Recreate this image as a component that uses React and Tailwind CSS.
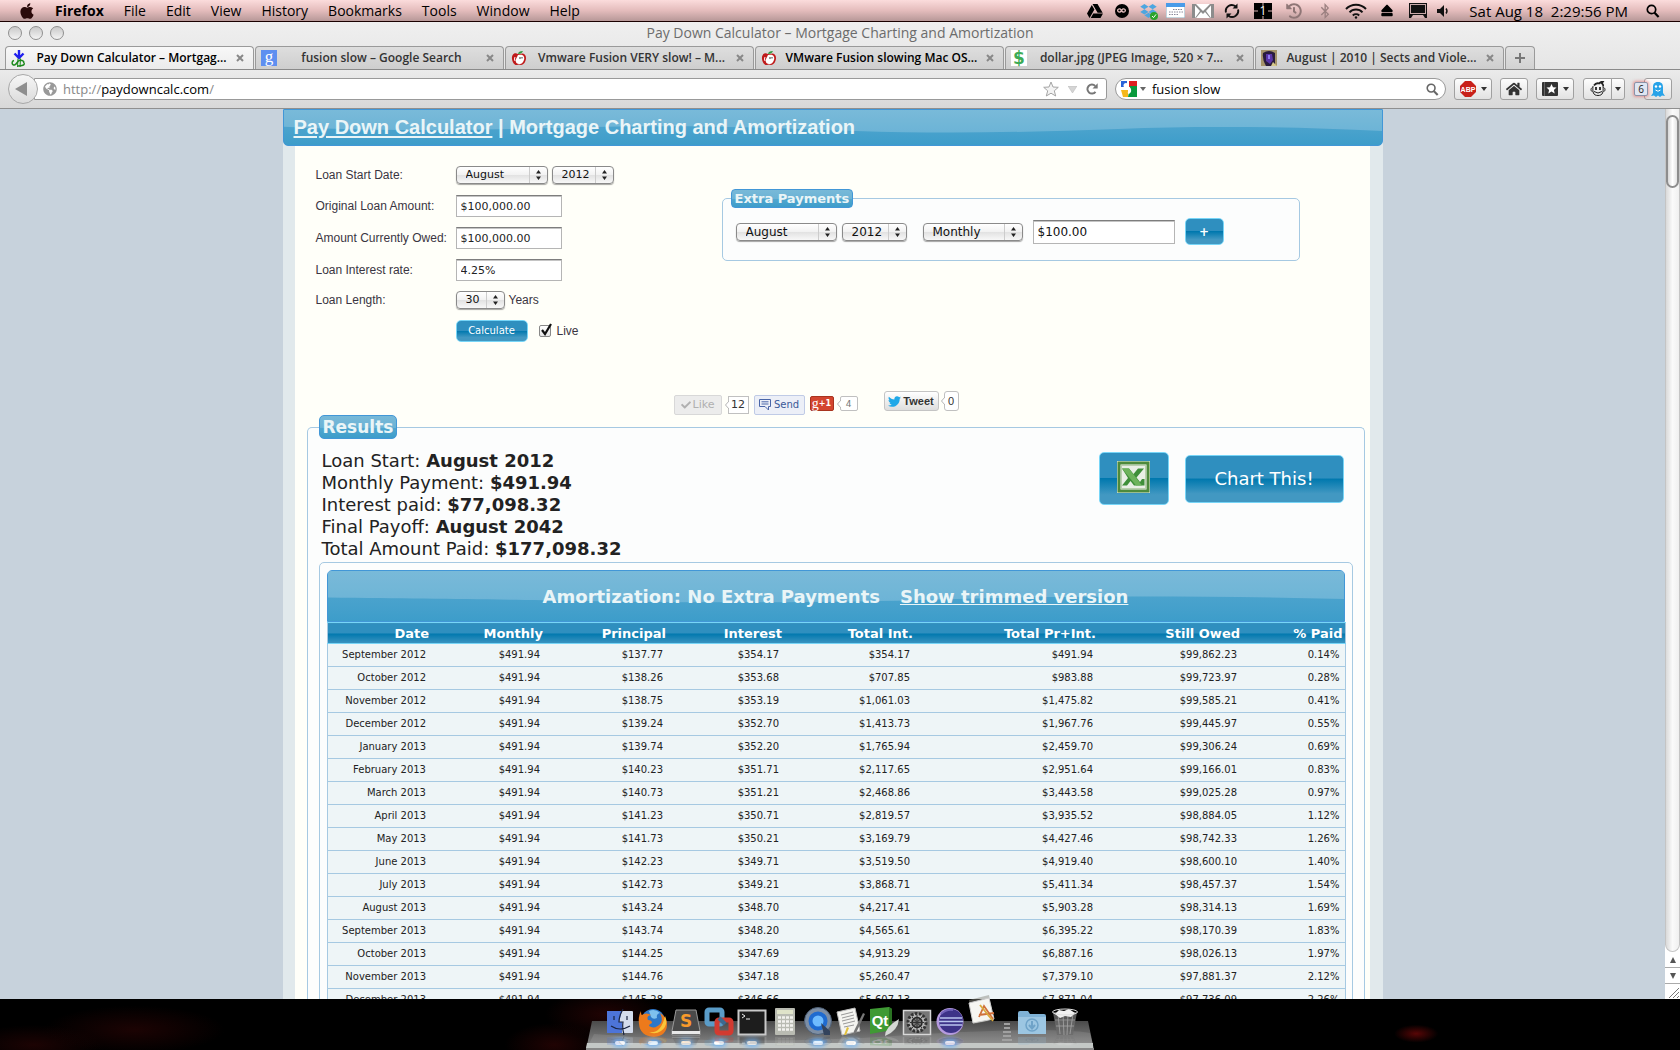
import React from "react";
import {
  FaApple,
  FaBluetoothB,
  FaDropbox,
  FaEject,
  FaGlobeAmericas,
  FaGoogleDrive,
  FaHistory,
  FaHome,
  FaInfinity,
  FaTwitter,
  FaCheck,
} from "react-icons/fa";

const MENUS = ["File", "Edit", "View", "History", "Bookmarks", "Tools", "Window", "Help"];

const ROWS = [
  ["September 2012", "$491.94", "$137.77", "$354.17", "$354.17", "$491.94", "$99,862.23", "0.14%"],
  ["October 2012", "$491.94", "$138.26", "$353.68", "$707.85", "$983.88", "$99,723.97", "0.28%"],
  ["November 2012", "$491.94", "$138.75", "$353.19", "$1,061.03", "$1,475.82", "$99,585.21", "0.41%"],
  ["December 2012", "$491.94", "$139.24", "$352.70", "$1,413.73", "$1,967.76", "$99,445.97", "0.55%"],
  ["January 2013", "$491.94", "$139.74", "$352.20", "$1,765.94", "$2,459.70", "$99,306.24", "0.69%"],
  ["February 2013", "$491.94", "$140.23", "$351.71", "$2,117.65", "$2,951.64", "$99,166.01", "0.83%"],
  ["March 2013", "$491.94", "$140.73", "$351.21", "$2,468.86", "$3,443.58", "$99,025.28", "0.97%"],
  ["April 2013", "$491.94", "$141.23", "$350.71", "$2,819.57", "$3,935.52", "$98,884.05", "1.12%"],
  ["May 2013", "$491.94", "$141.73", "$350.21", "$3,169.79", "$4,427.46", "$98,742.33", "1.26%"],
  ["June 2013", "$491.94", "$142.23", "$349.71", "$3,519.50", "$4,919.40", "$98,600.10", "1.40%"],
  ["July 2013", "$491.94", "$142.73", "$349.21", "$3,868.71", "$5,411.34", "$98,457.37", "1.54%"],
  ["August 2013", "$491.94", "$143.24", "$348.70", "$4,217.41", "$5,903.28", "$98,314.13", "1.69%"],
  ["September 2013", "$491.94", "$143.74", "$348.20", "$4,565.61", "$6,395.22", "$98,170.39", "1.83%"],
  ["October 2013", "$491.94", "$144.25", "$347.69", "$4,913.29", "$6,887.16", "$98,026.13", "1.97%"],
  ["November 2013", "$491.94", "$144.76", "$347.18", "$5,260.47", "$7,379.10", "$97,881.37", "2.12%"],
  ["December 2013", "$491.94", "$145.28", "$346.66", "$5,607.13", "$7,871.04", "$97,736.09", "2.26%"],
];

/* ---------- menu bar ---------- */

function Cell({ wide, children }) {
  return <span className={`flex items-center justify-center ${wide ? "w-[31px]" : "w-[27px]"}`}>{children}</span>;
}

function SearchGlyph({ className }) {
  return (
    <svg viewBox="0 0 14 14" className={className} fill="none" stroke="currentColor">
      <circle cx="5.5" cy="5.5" r="4.2" strokeWidth="1.7" />
      <path d="M8.6 8.8L12.6 13" strokeWidth="2.2" />
    </svg>
  );
}

function MenuBar() {
  return (
    <header className="flex h-[22px] shrink-0 items-center border-b border-[#1a0000] bg-linear-to-b from-[#fbdcdc] via-[#e4bcbc] to-[#b79898] pl-[19px] pr-5 text-sm leading-5 text-black">
      <FaApple className="mr-[20px] h-[18px] w-4 text-[#2a0a0a]" />
      <span className="mr-5 font-bold">Firefox</span>
      <nav className="flex gap-5">
        {MENUS.map((m) => (
          <button key={m} type="button">{m}</button>
        ))}
      </nav>
      <div className="ml-auto flex items-center">
        <Cell><FaGoogleDrive className="h-4 w-[18px]" /></Cell>
        <Cell>
          <span className="flex size-[14px] items-center justify-center rounded-full bg-black">
            <FaInfinity className="size-[9px] text-[#e2bcbc]" />
          </span>
        </Cell>
        <Cell>
          <span className="relative">
            <FaDropbox className="h-4 w-[17px] text-[#4da6e0]" />
            <svg viewBox="0 0 8 8" className="absolute -right-px -bottom-px size-[8px]">
              <circle cx="4" cy="4" r="4" fill="#2ba32b" />
              <path d="M2 4l1.5 1.6L6 2.4" stroke="#fff" fill="none" />
            </svg>
          </span>
        </Cell>
        <Cell>
          <svg viewBox="0 0 19 15" className="h-[15px] w-[19px]">
            <rect width="19" height="15" fill="#fff" stroke="#8ab" />
            <rect width="19" height="4" fill="#4a9be8" />
            <path d="M7 6.5h10M3 9h14M3 11.5h10" stroke="#889" strokeDasharray="1.5 1" />
          </svg>
        </Cell>
        <Cell>
          <svg viewBox="0 0 22 14" className="h-[14px] w-[22px]">
            <rect width="22" height="14" fill="#8c8c8c" />
            <path d="M4 0h14l-7 7zM3 14V1.5l5 5.5zM19 14V1.5L14 7zM4 14l5-6 2 2 2-2 5 6z" fill="#fff" />
          </svg>
        </Cell>
        <Cell wide>
          <svg viewBox="0 0 16 16" className="size-4" fill="none" stroke="#111" strokeWidth="1.9">
            <path d="M2 9.5a6 6 0 0 1 9.5-6.2M14 6.5a6 6 0 0 1-9.5 6.2" />
            <path d="M8.500 5.500h5V.5zM7.500 10.500h-5v5z" fill="#111" stroke="none" />
          </svg>
        </Cell>
        <Cell wide>
          <span className="relative flex h-4 w-[18px] items-center justify-center bg-black text-[12px] leading-3 text-white">
            <svg viewBox="0 0 18 16" className="absolute inset-0 h-4 w-[18px]" stroke="#d8b4b4"><path d="M9 0v3M9 13v3M0 8h4M14 8h4" /></svg>
            1
          </span>
        </Cell>
        <Cell wide><FaHistory className="size-4 text-[#8f7676]" /></Cell>
        <Cell wide><FaBluetoothB className="h-4 w-3 text-[#9b8080]" /></Cell>
        <Cell wide>
          <svg viewBox="0 0 22 16" className="h-4 w-[22px]" fill="none" stroke="#111" strokeWidth="2">
            <path d="M1 6a14 14 0 0 1 20 0M4.500 9.400a9 9 0 0 1 13 0M7.800 12.400a4.800 4.800 0 0 1 6.400 0" />
            <circle cx="11" cy="14.500" r="1.200" fill="#111" stroke="none" />
          </svg>
        </Cell>
        <Cell wide><FaEject className="h-[13px] w-3" /></Cell>
        <Cell wide>
          <svg viewBox="0 0 18 15" className="h-[15px] w-[18px]">
            <rect width="18" height="15" fill="#111" />
            <rect x="1.500" y="1.500" width="15" height="9" fill="none" stroke="#c9a9a9" />
            <path d="M2 15l2-3h10l2 3z" fill="#d5b3b3" />
          </svg>
        </Cell>
        <span className="mr-4 flex w-[20px] justify-center">
          <svg viewBox="0 0 12 12" className="size-3">
            <path d="M0 4h3l4-4v12L3 8H0z" fill="#111" />
            <path d="M9 3.500q2 2.500 0 5" stroke="#111" strokeWidth="1.400" fill="none" />
          </svg>
        </span>
        <span className="mr-[18px] text-[15px] whitespace-pre">Sat Aug 18  2:29:56 PM</span>
        <SearchGlyph className="size-[14px]" />
      </div>
    </header>
  );
}

/* ---------- browser chrome ---------- */

function DownDollar() {
  return (
    <svg viewBox="0 0 16 17" className="h-[17px] w-4" fill="none">
      <path d="M8 0v7M3.500 3.500L8 8l4.500-4.500" stroke="#2020ee" strokeWidth="2.400" />
      <path d="M3 10.500c-3 1-2 5 .5 4.500s2.500-4 5-4.500 5 .5 4 2.500M7 16c4 0 7-1 6-3" stroke="#1c8a1c" strokeWidth="1.500" />
      <path d="M7 8.500l-.5 8.500M9.500 8.500L9 17" stroke="#1c8a1c" />
    </svg>
  );
}

function GoogleG() {
  return (
    <span className="flex size-4 items-center justify-center bg-[#5e8ff0] pb-1 font-['Liberation_Serif',serif] text-[17px] leading-none font-normal text-white">g</span>
  );
}

function RedApple() {
  return (
    <svg viewBox="0 0 16 16" className="size-4">
      <path d="M7 4C3 2 .5 5 1 9c.5 4 3 6.500 5 6l2-.5 2 .5c3 0 5-4 5-7 0-4-3-5.500-6-4z" fill="#c01a1a" />
      <path d="M7 5c2 0 5-1 6 2 1 2-1 7-4 7S4 13 5 9z" fill="#fff" />
      <path d="M4 7q-1 2 0 4" stroke="#fff" fill="none" />
      <path d="M7 4c0-2 2-3 5-3-1 2-2 3-5 3z" fill="#2e9a3d" />
      <path d="M9 7v2M11 7v1.500" stroke="#333" />
    </svg>
  );
}

function DollarIcon() {
  return (
    <span className="flex size-4 items-center justify-center bg-white font-['DejaVu_Sans',sans-serif] text-[17px] leading-none font-bold text-[#3cab55]">$</span>
  );
}

function PortraitIcon() {
  return (
    <svg viewBox="0 0 16 16" className="size-4">
      <rect width="16" height="16" fill="#a5946a" />
      <path d="M2 3q6-4 12 0v13H5Q1 9 2 3z" fill="#2a1c3d" />
      <path d="M5 4h6l1 6-3 4-4-3z" fill="#5a35a8" />
      <path d="M7 5h2v4H7z" fill="#8f7bf0" />
      <path d="M12 12l4 4h-6z" fill="#d5c88a" />
    </svg>
  );
}

const TABS = [
  { icon: DownDollar, label: "Pay Down Calculator – Mortgag...", active: true },
  { icon: GoogleG, label: "fusion slow – Google Search" },
  { icon: RedApple, label: "Vmware Fusion VERY slow! – M..." },
  { icon: RedApple, label: "VMware Fusion slowing Mac OS...", unread: true },
  { icon: DollarIcon, label: "dollar.jpg (JPEG Image, 520 × 7..." },
  { icon: PortraitIcon, label: "August | 2010 | Sects and Viole..." },
];

function TabStrip() {
  return (
    <div className="flex h-[23px] items-end gap-px border-b border-[#8a8a8a] pl-[5px]">
      {TABS.map(({ icon: Icon, label, active, unread }) => (
        <div
          key={label}
          className={`flex h-[23px] max-w-[249px] flex-1 items-center rounded-t-[4px] border border-b-0 border-[#9a9a9a] pl-[5px] pr-[9px] ${
            active ? "bg-linear-to-b from-[#f8f8f8] to-[#ebebeb]" : "bg-linear-to-b from-[#dedede] to-[#cecece]"
          }`}
        >
          <Icon />
          <button
            type="button"
            className={`min-w-0 flex-1 overflow-hidden text-center text-xs font-semibold whitespace-nowrap ${
              active || unread ? "text-black" : "text-[#333]"
            }`}
          >
            {label}
          </button>
          <button type="button" aria-label="Close tab">
            <svg viewBox="0 0 8 8" className="size-2" stroke="#888" strokeWidth="2">
              <path d="M1 1l6 6M7 1L1 7" />
            </svg>
          </button>
        </div>
      ))}
      <button type="button" aria-label="New tab" className="flex h-[23px] w-[30px] items-center justify-center rounded-t-[4px] border border-b-0 border-[#9a9a9a] bg-linear-to-b from-[#e2e2e2] to-[#d2d2d2]">
        <svg viewBox="0 0 10 10" className="size-[10px]" stroke="#777" strokeWidth="2"><path d="M5 0v10M0 5h10" /></svg>
      </button>
    </div>
  );
}

function Caret({ className = "" }) {
  return <svg viewBox="0 0 6 4" className={`h-1 w-[6px] ${className}`}><path d="M0 0h6L3 4z" fill="currentColor" /></svg>;
}

function ToolButton({ label, className, children }) {
  return (
    <button type="button" aria-label={label} className={`flex h-[22px] items-center justify-center gap-[5px] rounded-[3px] border border-[#a0a0a0] bg-linear-to-b from-[#fdfdfd] to-[#e2e2e2] text-[#333] ${className}`}>
      {children}
    </button>
  );
}

function NavBar() {
  return (
    <div className="flex h-[39px] items-center border-b border-[#8f8f8f] bg-linear-to-b from-[#ebebeb] to-[#d8d8d8] pl-2 pr-2">
      <button type="button" aria-label="Back" className="z-10 flex size-[30px] shrink-0 items-center justify-center rounded-full border border-[#a8a8a8] bg-linear-to-b from-[#f6f6f6] to-[#dcdcdc]">
        <svg viewBox="0 0 12 14" className="mr-1 h-[14px] w-3"><path d="M12 0v14L0 7z" fill="#8e8e8e" /></svg>
      </button>
      <div className="-ml-1 flex h-[22px] flex-1 items-center rounded-r-[3px] border border-[#999] bg-white pl-2 pr-2">
        <FaGlobeAmericas className="mr-[6px] size-[14px] text-[#999]" />
        <p className="flex-1 text-[13px] leading-5 text-[#888]">
          http://<span className="text-black">paydowncalc.com</span>/
        </p>
        <svg viewBox="0 0 16 16" className="mr-1 size-4"><path d="M8 1l2 5 5.300.300-4 3.500 1.400 5.200L8 12.200 3.300 15l1.400-5.200-4-3.500L6 6z" fill="#f3f3f3" stroke="#a5a5a5" /></svg>
        <svg viewBox="0 0 9 7" className="mx-[5px] h-[7px] w-[9px]"><path d="M0 0h9L4.500 7z" fill="#d5d5d5" stroke="#b5b5b5" strokeWidth=".5" /></svg>
        <svg viewBox="0 0 12 12" className="ml-1 size-3" fill="none"><path d="M9.500 8.800A4.500 4.500 0 1 1 9.200 3" stroke="#777" strokeWidth="2" /><path d="M6.500 5.500h5.200V.3z" fill="#777" /></svg>
      </div>
      <div className="ml-2 flex h-[22px] w-[331px] items-center rounded-full border border-[#999] bg-white pl-[5px] pr-[6px]">
        <svg viewBox="0 0 16 16" className="size-4">
          <path d="M8 0h8v6H8z" fill="#e02020" /><path d="M9 5h7v11H7z" fill="#0a9a3c" />
          <path d="M0 0h6v6H0z" fill="#2a62d8" /><path d="M0 9h7v7H2z" fill="#f5b81c" />
          <circle cx="5" cy="4.500" r="2.500" fill="#fff" /><path d="M6 6c4 1 4 5 1 6" fill="none" stroke="#fff" strokeWidth="2" />
        </svg>
        <Caret className="mx-[3px] text-[#666]" />
        <input aria-label="Search" defaultValue="fusion slow" className="min-w-0 flex-1 bg-transparent pl-[3px] text-[13px] leading-5 text-black outline-none" />
        <SearchGlyph className="size-[13px] text-[#666]" />
      </div>
      <ToolButton label="Adblock Plus" className="ml-[8px] w-[38px]">
        <svg viewBox="0 0 16 16" className="size-4">
          <path d="M5 0h6l5 5v6l-5 5H5l-5-5V5z" fill="#c8201a" />
          <text x="8" y="10.500" textAnchor="middle" fontSize="7" fontWeight="700" fill="#fff" fontFamily="Liberation Sans">ABP</text>
        </svg>
        <Caret />
      </ToolButton>
      <ToolButton label="Home" className="ml-2 w-[28px]"><FaHome className="size-4" /></ToolButton>
      <ToolButton label="Bookmarks" className="ml-2 w-[38px]">
        <svg viewBox="0 0 16 14" className="h-[14px] w-4">
          <rect width="16" height="14" rx="1" fill="#333" /><path d="M2.500 0v14" stroke="#666" />
          <path d="M9.500 2l1.500 3.300 3.500.3-2.600 2.300.8 3.500-3.200-1.800-3.200 1.800.8-3.500-2.600-2.300L8 5.300z" fill="#fff" />
        </svg>
        <Caret />
      </ToolButton>
      <ToolButton label="Greasemonkey" className="ml-[9px] w-[29px] rounded-r-none">
        <svg viewBox="0 0 16 16" className="size-4" fill="none" stroke="#222">
          <path d="M4 4.500Q6 1.500 9 2.500q2-2 4-2-1 1.500-1 2 1.500 1 1 2.500" strokeWidth="1.800" />
          <path d="M2.500 6.500c-2 .5-2 4 0 4M13.500 6.500c2 .5 2 4 0 4M3 5c-.5 6 0 9.500 5 9.500S13.500 11 13 5" />
          <path d="M6 6v3M10 6v3" strokeWidth="1.800" /><path d="M4 10.500q4 3 8 0" />
        </svg>
      </ToolButton>
      <ToolButton label="Greasemonkey menu" className="-ml-px w-[14px] rounded-l-none"><Caret /></ToolButton>
      <div className="ml-[9px] flex items-center">
        <span className="z-10 flex size-[14px] items-center justify-center rounded-[2px] border border-[#8a93a8] bg-[#dfe6f2] text-[10px] leading-3 text-[#222] shadow-[0_0_3px_1px_rgba(230,80,80,0.5)]">6</span>
        <ToolButton label="Ghostery" className="-ml-1 w-[28px]">
          <svg viewBox="0 0 14 15" className="h-[15px] w-[14px]">
            <path d="M7 0C3 0 2 2.500 2 5v6L0 14l3-.5L5 15l2-1.500L9 15l2-1.500 3 .5-2-3V5c0-2.500-1-5-5-5z" fill="#28a3e8" />
            <circle cx="5" cy="4.500" r="1.200" fill="#fff" /><circle cx="9" cy="4.500" r="1.200" fill="#fff" />
            <path d="M4.500 8q2.500 2.500 5 0" stroke="#fff" fill="none" />
          </svg>
        </ToolButton>
      </div>
    </div>
  );
}

function BrowserChrome() {
  return (
    <div className="shrink-0 bg-linear-to-b from-[#efefef] to-[#dedede]">
      <div className="flex h-[25px] items-center px-2 pb-[3px]">
        <div className="flex w-[56px] gap-[7px]">
          {["Close", "Minimize", "Zoom"].map((n) => (
            <button key={n} type="button" aria-label={n} className="size-[14px] rounded-full border border-[#8f8f8f] bg-linear-to-b from-[#c9c9c9] to-[#f4f4f4]" />
          ))}
        </div>
        <h1 className="mr-[56px] flex-1 text-center text-sm leading-5 text-[#6c6c6c]">Pay Down Calculator – Mortgage Charting and Amortization</h1>
      </div>
      <TabStrip />
      <NavBar />
    </div>
  );
}

/* ---------- page ---------- */

const BLUE_BAR = "border border-[#4297d7] bg-linear-to-b from-[#58a9d0] to-[#3d9dca] text-[#eaf5f7]";
const BLUE_LEGEND =
  "border border-[#4297d7] bg-[linear-gradient(to_bottom,#78b9d8_0%,#6cb3d5_52%,#50a6cf_56%,#3d9dca_100%)] text-[#eaf5f7]";
const GLOSS_BUTTON =
  "flex items-center justify-center rounded-[5px] border border-[#77d5f7] bg-[linear-gradient(to_bottom,#2f8fbf_0%,#2f8fbf_48%,#0078ae_50%,#4298c2_82%,#4298c2_100%)] text-white";

function Wave({ d }) {
  return (
    <svg viewBox="0 0 100 100" preserveAspectRatio="none" className="absolute inset-0 size-full">
      <path d={d} fill="#ffffff" fillOpacity=".2" />
    </svg>
  );
}

function MacSelect({ label, id, value, width, text = "text-[11px]" }) {
  return (
    <span className={`relative inline-flex h-[18px] ${width}`}>
      <select
        id={id}
        aria-label={label}
        defaultValue={value}
        className={`h-[18px] w-full appearance-none rounded-[4px] border border-[#8a8a8a] bg-[linear-gradient(to_bottom,#ffffff_0%,#f2f2f2_48%,#e2e2e2_52%,#f8f8f8_100%)] pl-[9px] leading-4 text-[#111] shadow-[0_1px_1px_rgba(0,0,0,0.35)] ${text}`}
      >
        <option>{value}</option>
      </select>
      <svg viewBox="0 0 18 16" className="pointer-events-none absolute top-px right-px h-4 w-[18px]">
        <path d="M.5 0v16" stroke="#ccc" />
        <path d="M7 6.500L9.500 3l2.500 3.500zM7 9.500L9.500 13l2.500-3.500z" fill="#222" />
      </svg>
    </span>
  );
}

function TextRow({ id, label, value }) {
  return (
    <div className="flex h-[32px] items-center">
      <label htmlFor={id} className="w-[140px]">{label}</label>
      <input id={id} defaultValue={value} className="h-[22px] w-[106px] border border-[#b5b5b5] border-t-[#7d7d7d] bg-white px-1 font-['DejaVu_Sans',sans-serif] text-[11px] text-[#222] shadow-[inset_0_1px_0_#c4c4c4] outline-none" />
    </div>
  );
}

function LoanForm() {
  return (
    <form className="w-[406px] text-xs leading-4 text-[#3a3542]">
      <div className="flex h-[30px] items-center">
        <label htmlFor="start-month" className="w-[140px]">Loan Start Date:</label>
        <div className="flex gap-1 font-['DejaVu_Sans',sans-serif]">
          <MacSelect id="start-month" label="Loan start month" value="August" width="w-[92px]" />
          <MacSelect label="Loan start year" value="2012" width="w-[62px]" />
        </div>
      </div>
      <TextRow id="original" label="Original Loan Amount:" value="$100,000.00" />
      <TextRow id="owed" label="Amount Currently Owed:" value="$100,000.00" />
      <TextRow id="rate" label="Loan Interest rate:" value="4.25%" />
      <div className="flex h-[28px] items-center">
        <label htmlFor="length" className="w-[140px]">Loan Length:</label>
        <span className="mr-1 flex font-['DejaVu_Sans',sans-serif]">
          <MacSelect id="length" label="Loan length" value="30" width="w-[49px]" />
        </span>
        Years
      </div>
      <div className="flex h-[34px] items-center pl-[140px]">
        <button type="button" className={`h-[22px] w-[72px] font-['DejaVu_Sans',sans-serif] text-[10px] ${GLOSS_BUTTON}`}>Calculate</button>
        <label className="ml-[11px] flex items-center gap-[6px]">
          <span className="relative flex">
            <input type="checkbox" defaultChecked className="size-3 appearance-none rounded-[2px] border border-[#888] bg-linear-to-b from-white to-[#e5e5e5]" />
            <svg viewBox="0 0 14 14" className="pointer-events-none absolute -top-[2px] left-0 size-[14px]"><path d="M3 7l3 4 6-10" fill="none" stroke="#111" strokeWidth="2.200" /></svg>
          </span>
          Live
        </label>
      </div>
    </form>
  );
}

function ExtraPayments() {
  return (
    <fieldset className="mt-[29px] min-w-0 max-w-[578px] flex-1 self-start rounded-[5px] border border-[#a6c9e2] bg-[#fcfdfd] pr-2 pb-[15px] pl-[8px] font-['DejaVu_Sans',sans-serif]">
      <legend className={`rounded-[4px] px-[3px] pt-px text-[13px] leading-4 font-bold ${BLUE_LEGEND}`}>Extra Payments</legend>
      <div className="flex items-center pt-[10px] pl-[5px]">
        <MacSelect label="Extra payment month" value="August" width="w-[101px]" text="text-xs" />
        <span className="ml-[5px] flex"><MacSelect label="Extra payment year" value="2012" width="w-[65px]" text="text-xs" /></span>
        <span className="ml-4 flex"><MacSelect label="Frequency" value="Monthly" width="w-[100px]" text="text-xs" /></span>
        <input aria-label="Extra amount" defaultValue="$100.00" className="ml-[10px] h-6 w-[142px] border border-[#b5b5b5] border-t-[#7d7d7d] bg-white px-1 text-xs text-[#111] shadow-[inset_0_1px_0_#c4c4c4] outline-none" />
        <button type="button" aria-label="Add payment" className={`ml-[10px] h-[27px] w-[39px] text-xs font-bold ${GLOSS_BUTTON}`}>+</button>
      </div>
    </fieldset>
  );
}

function Bubble({ className = "", children }) {
  return (
    <span className={`relative flex items-center justify-center border border-[#c0c0c0] bg-white ${className}`}>
      <svg viewBox="0 0 4 8" className="absolute top-1/2 -left-1 -mt-1 h-2 w-1"><path d="M4 0L.5 4 4 8" fill="#fff" stroke="#b5b5b5" /></svg>
      {children}
    </span>
  );
}

function SocialRow() {
  return (
    <div className="flex h-6 items-start font-['DejaVu_Sans',sans-serif] text-[11px] leading-4">
      <button type="button" className="mt-1 flex h-5 w-[48px] items-center justify-center gap-0.5 rounded-[2px] border border-[#d8d8d8] bg-[#ececec] text-[#b0b0b0]">
        <FaCheck className="size-[10px]" />Like
      </button>
      <Bubble className="mt-[5px] ml-[6px] h-[18px] w-[21px] text-[#333]">12</Bubble>
      <button type="button" className="mt-1 ml-[5px] flex h-5 w-[51px] items-center justify-center gap-[3px] rounded-[2px] border border-[#c0cbe6] bg-[#eceff7] text-[10px] text-[#3b5998]">
        <svg viewBox="0 0 12 12" className="size-3" fill="none" stroke="#4a66a8"><path d="M.5.5h11v7h-2V11L6 7.500H.5zM2.500 2.800h7M2.500 5h7" /></svg>Send
      </button>
      <button type="button" className="mt-[5px] ml-[5px] flex h-[15px] w-[24px] items-center justify-center rounded-[2px] border border-[#a8341f] bg-[#d3452f] text-white">
        <span className="font-['Liberation_Serif',serif] text-[14px] leading-3">g</span>
        <span className="text-[8px] leading-3 font-bold">+1</span>
      </button>
      <Bubble className="mt-[5px] ml-[6px] h-[15px] w-[18px] rounded-[2px] text-[9px] text-[#777]">4</Bubble>
      <button type="button" className="ml-[26px] flex h-5 w-[55px] items-center justify-center gap-0.5 rounded-[3px] border border-[#c4c4c4] bg-linear-to-b from-white to-[#dedede] font-['Liberation_Sans',sans-serif] text-[11px] font-bold text-[#333]">
        <FaTwitter className="size-[13px] text-[#1fa8e8]" />Tweet
      </button>
      <Bubble className="ml-[5px] h-5 w-[15px] rounded-[3px] font-['Liberation_Sans',sans-serif] text-[#333]">0</Bubble>
    </div>
  );
}

function ExcelIcon() {
  return (
    <svg viewBox="0 0 33 32" className="h-8 w-[33px]">
      <rect width="33" height="32" fill="#e8efe0" />
      <rect x="2" y="2" width="29" height="28" fill="#f7f9f4" stroke="#4d8a3c" strokeWidth="3" />
      <rect x="4.500" y="4.500" width="24" height="23" fill="#e9efe6" stroke="#b9cfae" />
      <path d="M5 7.500h7l4.500 5.500L21 7.500h6l-7.500 9 3.500 4.500 2-3h2.500v6.500H17L13.500 20 10 24.500H5l6-7.500z" fill="#3f8f3a" />
      <path d="M5 7.500h7L25 24.500h-6z" fill="#6db35c" />
    </svg>
  );
}

const SUMMARY = [
  ["Loan Start:", "August 2012"],
  ["Monthly Payment:", "$491.94"],
  ["Interest paid:", "$77,098.32"],
  ["Final Payoff:", "August 2042"],
  ["Total Amount Paid:", "$177,098.32"],
];

function AmortizationTable() {
  return (
    <div className="rounded-[5px] border border-[#a6c9e2] bg-[#fcfdfd] p-[7px] pb-0">
      <div className={`relative flex h-[52px] items-center justify-center gap-5 rounded-t-[5px] pt-[2px] text-[18px] leading-6 font-bold ${BLUE_BAR}`}>
        <Wave d="M0 0H100V56C85 48 70 50 60 57 S35 64 25 60 S10 56 0 53Z" />
        <h2 className="relative">Amortization: No Extra Payments</h2>
        <a href="#trimmed" className="relative underline">Show trimmed version</a>
      </div>
      <table className="w-full table-fixed border-collapse border-x border-[#a6c9e2] text-right">
        <colgroup>
          <col className="w-[104px]" />
          <col className="w-[114px]" />
          <col className="w-[123px]" />
          <col className="w-[116px]" />
          <col className="w-[131px]" />
          <col className="w-[183px]" />
          <col className="w-[144px]" />
          <col className="w-[103px]" />
        </colgroup>
        <thead>
          <tr className="h-[21px] border-y border-[#77d5f7] bg-[linear-gradient(to_bottom,#2f8fbf_0%,#2f8fbf_49%,#0078ae_51%,#3a93c0_100%)] text-[13px] leading-4 text-white">
            {["Date", "Monthly", "Principal", "Interest", "Total Int.", "Total Pr+Int.", "Still Owed", "% Paid"].map((h) => (
              <th key={h} scope="col" className="pt-px pr-[2px] font-bold">{h}</th>
            ))}
          </tr>
        </thead>
        <tbody>
          {ROWS.map((r) => (
            <tr key={r[0]} className="h-[23px] border-b border-[#a6c9e2] bg-[#eef5f7] text-[10px] leading-4 text-[#222]">
              {r.map((c, i) => (
                <td key={i} className="pr-[5px]">{c}</td>
              ))}
            </tr>
          ))}
        </tbody>
      </table>
    </div>
  );
}

function Results() {
  return (
    <fieldset className="mr-[5px] ml-3 min-w-0 rounded-t-[5px] border border-b-0 border-[#a6c9e2] bg-[#fcfdfd] px-[11px] font-['DejaVu_Sans',sans-serif]">
      <legend className={`rounded-[5px] px-[3px] pt-px text-[17px] leading-[21px] font-bold ${BLUE_LEGEND}`}>Results</legend>
      <div className="flex items-start justify-between pt-[11px] pr-[9px] pl-[3px] pb-0.5">
        <div className="text-[18px] leading-[22px] text-[#222]">
          {SUMMARY.map(([k, v]) => (
            <p key={k}>{k} <b>{v}</b></p>
          ))}
        </div>
        <div className="mt-0.5 flex items-center gap-4">
          <button type="button" aria-label="Export to Excel" className={`h-[53px] w-[70px] pb-1 ${GLOSS_BUTTON}`}><ExcelIcon /></button>
          <button type="button" className={`h-[48px] w-[159px] text-[18px] ${GLOSS_BUTTON}`}>Chart This!</button>
        </div>
      </div>
      <AmortizationTable />
    </fieldset>
  );
}

function CalculatorPage() {
  return (
    <div className="min-w-0 flex-1 overflow-hidden bg-[#c7d2dc]">
      <div className="mx-auto min-h-full max-w-[1100px] bg-[#e1e9ec]">
        <div className={`relative h-[37px] overflow-hidden rounded-b-[5px] px-[10px] font-['Liberation_Sans',sans-serif] text-xl leading-[35px] font-bold ${BLUE_BAR}`}>
          <Wave d="M0 0H100V60C92 48 84 44 76 54 S60 68 52 60 S38 40 26 50 S8 60 0 48Z" />
          <p className="relative"><a href="#home" className="underline underline-offset-2">Pay Down Calculator</a> | Mortgage Charting and Amortization</p>
        </div>
        <main className="mr-[13px] ml-3 bg-[#fffff9] font-['Liberation_Sans',sans-serif]">
          <div className="flex pt-[14px] pl-[21px]">
            <LoanForm />
            <ExtraPayments />
          </div>
          <div className="mt-[43px] pl-[379px]"><SocialRow /></div>
          <Results />
        </main>
      </div>
    </div>
  );
}

function Scrollbar() {
  return (
    <div aria-hidden="true" className="flex w-[15px] shrink-0 flex-col bg-white">
      <div className="flex-1 rounded-b-full border-x border-b border-[#c4c4c4] bg-linear-to-r from-[#dadada] via-[#fafafa] to-[#f0f0f0] pt-[6px]">
        <div className="h-[73px] rounded-full border-2 border-[#8d8d8d] bg-linear-to-r from-[#d8d8d8] via-white to-[#e2e2e2]" />
      </div>
      <div className="flex h-4 items-center justify-center border-b border-[#aaa]"><svg viewBox="0 0 6 6" className="size-[6px]"><path d="M0 6h6L3 0z" fill="#555" /></svg></div>
      <div className="flex h-4 items-center justify-center border-b border-[#aaa]"><svg viewBox="0 0 6 6" className="size-[6px]"><path d="M0 0h6L3 6z" fill="#555" /></svg></div>
      <svg viewBox="0 0 15 15" className="size-[15px]" stroke="#777"><path d="M4 14L14 4M8 14l6-6M12 14l2-2" /></svg>
    </div>
  );
}

/* ---------- dock ---------- */

const DOCK = [
  { name: "Finder", lit: true, art: (
    <>
      <rect x="2" y="4" width="26" height="22" rx="1" fill="#d4dcec" />
      <path d="M2 4h15l-3 11h3v11H2z" fill="#4d74d8" />
      <path d="M9 9v4M22 9v4M6 19q9 6 19 0M18 2q-4 7-4 13h4q-1 6 1 13" fill="none" stroke="#1a2440" strokeWidth="1.200" />
    </>
  ) },
  { name: "Firefox", lit: true, art: (
    <>
      <circle cx="15" cy="14" r="12" fill="#2d77c8" />
      <path d="M11 4q6-3 11 2-4 1-3 5-4 2-6-1z" fill="#7ec0ee" />
      <path d="M3 4q0 4 1 4 4-3 9 0-5 1-3 5 4 0 4 3-3 1-3 3 6 4 12-3 2-4-1-10 7 4 7 11 0 12-13 13Q2 29 1 17 0 9 3 4z" fill="#ec7a1c" />
      <path d="M27 9q4 9-4 15-6 4-12 1 12 2 16-16z" fill="#f9c63a" />
    </>
  ) },
  { name: "Sublime Text", lit: true, art: (
    <>
      <path d="M5 3h20l4 21v4H1v-4z" fill="#4a4a4a" stroke="#999" />
      <path d="M1 24h28v3H1z" fill="#e8e8e8" />
      <text x="15" y="20" textAnchor="middle" fontSize="17" fontWeight="700" fill="#f79a2b" fontFamily="DejaVu Sans">S</text>
    </>
  ) },
  { name: "VMware Fusion", lit: true, art: (
    <>
      <rect x="3" y="3" width="15" height="14" rx="2" fill="none" stroke="#5a9cc8" strokeWidth="5" />
      <rect x="13" y="13" width="14" height="13" rx="2" fill="none" stroke="#d33a30" strokeWidth="5" />
      <path d="M15 11l6 6" stroke="#3c6a90" strokeWidth="4" />
    </>
  ) },
  { name: "Terminal", lit: true, art: (
    <>
      <rect x="1.500" y="3.500" width="27" height="24" fill="#1d1d1d" stroke="#c9c9c9" strokeWidth="2" />
      <path d="M5 7l3 2-3 2M9 12h4" stroke="#eee" fill="none" />
    </>
  ) },
  { name: "Calculator", art: (
    <>
      <rect x="5" y="1" width="20" height="27" rx="1" fill="#b9bbb2" />
      <rect x="7" y="3" width="16" height="4" fill="#dfe3c9" />
      <path d="M8 10.500h15M8 14.500h15M8 18.500h15M8 22.500h15" stroke="#f2f2ee" strokeWidth="2.500" strokeDasharray="3 1" />
    </>
  ) },
  { name: "QuickTime", lit: true, art: (
    <>
      <circle cx="15" cy="14" r="11.500" fill="#1f6bd0" stroke="#7d8ea4" strokeWidth="4" />
      <circle cx="15" cy="14" r="13.500" fill="none" stroke="#4f6076" />
      <circle cx="15" cy="14" r="5.500" fill="#6fbcff" />
      <path d="M18 16l9 8v4h-6z" fill="#33435c" />
    </>
  ) },
  { name: "TextEdit", lit: true, art: (
    <>
      <path d="M1 5l18-4 5 23-18 4z" fill="#f4f4f0" stroke="#bbb" />
      <path d="M5 8l12-3M6 11l12-3M6 14l12-3M7 17l12-3M8 20l10-2" stroke="#999" />
      <path d="M29 7l-9 19-3 2 1-4L27 6z" fill="#777" /><path d="M8 28l3-8 2 1-3 7z" fill="#e2c13c" />
    </>
  ) },
  { name: "Qt Creator", art: (
    <>
      <path d="M1 2l19-2 3 2v21L1 27z" fill="#3f9a34" /><path d="M20 0l3 2v22l-3-1z" fill="#2a7322" />
      <text x="11" y="19" textAnchor="middle" fontSize="15" fontWeight="700" fill="#fff" fontFamily="Liberation Sans">Qt</text>
      <path d="M30 12q-1 12-14 17 0-9 14-17z" fill="#d5d8d5" />
    </>
  ) },
  { name: "System Preferences", art: (
    <>
      <rect x="1.500" y="3.500" width="27" height="24" fill="#777" stroke="#d8d8d8" strokeWidth="1.500" />
      <circle cx="15" cy="15.500" r="9" fill="#b5b5b5" stroke="#333" strokeWidth="3" strokeDasharray="2.500 1.500" />
      <circle cx="15" cy="15.500" r="5" fill="#777" stroke="#222" strokeWidth="1.500" />
      <path d="M15 8v15M8 15.500h14M10 10l10 11M20 10L10 21" stroke="#333" />
    </>
  ) },
  { name: "Eclipse", lit: true, art: (
    <>
      <circle cx="15" cy="14.500" r="13.500" fill="#b59ade" /><circle cx="16" cy="14" r="12" fill="#3d3388" />
      <path d="M5 11h22M4 14.500h24M5 18h22" stroke="#b9c5ee" strokeWidth="1.600" />
      <path d="M6 7q5-5 12-4" stroke="#6f62b8" strokeWidth="2" fill="none" />
    </>
  ) },
  { name: "Application Shortcut", raised: true, art: (
    <>
      <path d="M1 5l20-5 5 25-21 4z" fill="#8a8a80" opacity=".5" />
      <path d="M1 8l20-5 5 21-21 4z" fill="#f6f6f2" stroke="#ccc" />
      <path d="M11 22L16 11l9 13M11 20l15-2" stroke="#d0703c" strokeWidth="1.800" fill="none" />
      <path d="M12 10l13 16" stroke="#d9a83c" strokeWidth="1.800" />
    </>
  ) },
];

const PLACES = [
  { name: "Downloads", art: (
    <>
      <path d="M1 6q0-2 2-2h8l2 3h14q2 0 2 2v18H1z" fill="#7fb2d6" />
      <path d="M1 10h28v17H1z" fill="#9cc6e2" />
      <circle cx="15" cy="18" r="6" fill="none" stroke="#6fa3c8" strokeWidth="1.500" />
      <path d="M15 14v7M12 18l3 3.500 3-3.500" stroke="#6fa3c8" strokeWidth="2" fill="none" />
    </>
  ) },
  { name: "Trash", art: (
    <>
      <path d="M3 5h24l-4 23H7z" fill="#6a6a6a" opacity=".8" />
      <path d="M8 7l2 20M13 7l1 21M18 7l-1 21M23 7l-3 20M5 13h20M6 19h18" stroke="#a5a5a5" strokeWidth=".8" />
      <path d="M5 7l4-4 5 1 5-2 6 4-4 4-6-1-5 2z" fill="#f0f0f0" />
      <ellipse cx="15" cy="5" rx="12.500" ry="3" fill="none" stroke="#ddd" />
    </>
  ) },
];

function DockItem({ name, art, lit, raised }) {
  return (
    <button type="button" aria-label={name} className={`relative flex w-[33px] flex-col items-center ${raised ? "-top-3" : ""}`}>
      <svg viewBox="0 0 30 30" className="size-[30px]">{art}</svg>
      {!raised && <svg viewBox="0 0 30 30" className="absolute top-[29px] h-[10px] w-[30px] opacity-20" preserveAspectRatio="none"><g transform="translate(0 30) scale(1 -1)">{art}</g></svg>}
      {lit && <span className="mt-[4px] h-1 w-[10px] rounded-full bg-white shadow-[0_0_5px_2px_#7ab8f5]" />}
    </button>
  );
}

function Dock() {
  return (
    <footer className="relative flex h-[51px] shrink-0 items-end justify-center bg-[radial-gradient(ellipse_90px_24px_at_8%_60%,#1c0303,transparent),radial-gradient(ellipse_70px_20px_at_2%_90%,#1c0303,transparent),radial-gradient(ellipse_60px_24px_at_36%_30%,#200303,transparent),radial-gradient(ellipse_50px_22px_at_33%_90%,#200303,transparent),radial-gradient(ellipse_22px_9px_at_84.3%_68%,#580606,transparent)] bg-black">
      <svg viewBox="0 0 508 29" preserveAspectRatio="none" className="absolute bottom-0 h-[29px] w-[508px]">
        <defs>
          <linearGradient id="shelf" x1="0" y1="0" x2="0" y2="1"><stop offset="0" stopColor="#4a4a4a" /><stop offset="1" stopColor="#909090" /></linearGradient>
        </defs>
        <path d="M6 0h496l6 29H0z" fill="url(#shelf)" />
        <path d="M8 13q150 12 300 2t196-3l4 17H0z" fill="#fff" fillOpacity=".1" />
        <path d="M1 22h506v5H0z" fill="#c4c8c6" /><path d="M0 27h508v2H0z" fill="#888" />
      </svg>
      <div className="relative flex h-[43px] items-start pl-1">
        {DOCK.map((d) => <DockItem key={d.name} {...d} />)}
        <svg viewBox="0 0 16 22" className="mt-4 h-[22px] w-4" stroke="#a0a0a0" strokeWidth="2"><path d="M5 1h6M5 5h6M4 9h8M4 13h8M3 17h10" /></svg>
        {PLACES.map((d) => <DockItem key={d.name} {...d} />)}
      </div>
    </footer>
  );
}

export default function App() {
  return (
    <div className="flex h-screen flex-col overflow-hidden bg-black font-['Open_Sans',sans-serif]">
      <MenuBar />
      <BrowserChrome />
      <div className="flex min-h-0 flex-1">
        <CalculatorPage />
        <Scrollbar />
      </div>
      <Dock />
    </div>
  );
}
